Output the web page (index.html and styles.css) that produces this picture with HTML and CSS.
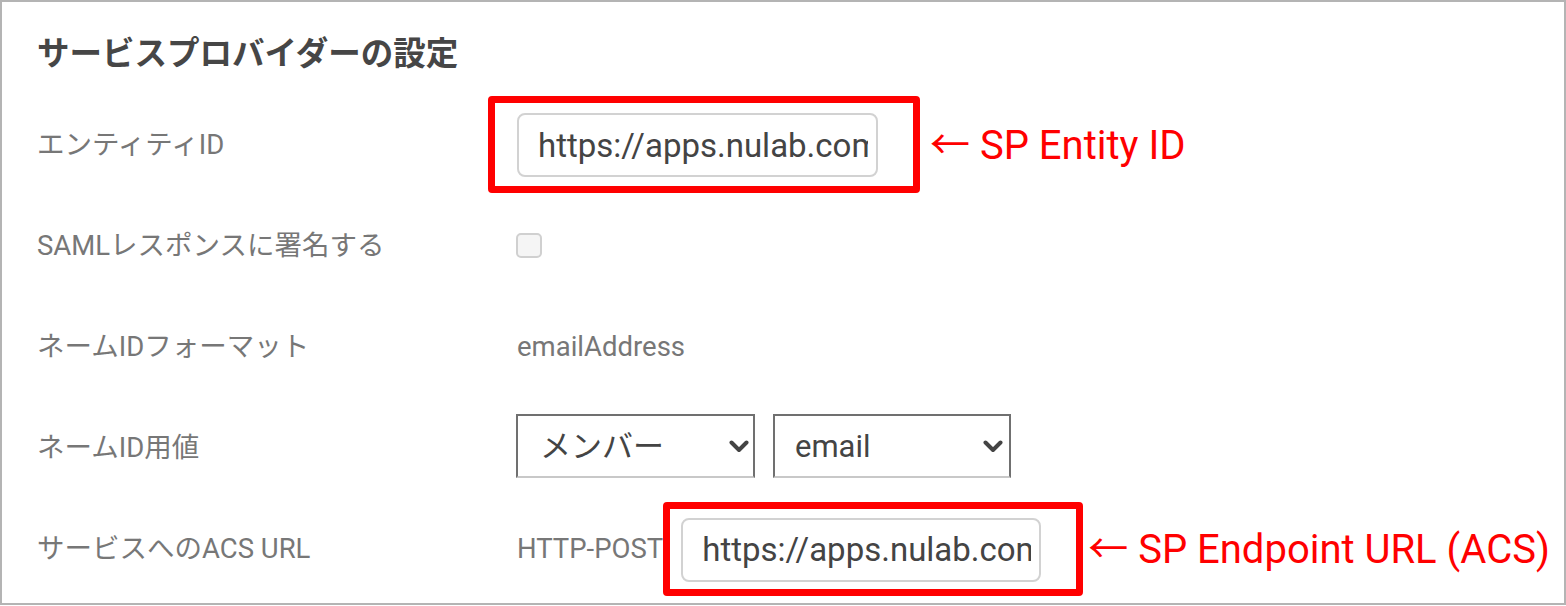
FILE: index.html
```html
<!DOCTYPE html>
<html lang="ja">
<head>
  <meta charset="UTF-8" />
  <meta name="viewport" content="width=device-width, initial-scale=1.0"/>
  <title>サービスプロバイダーの設定</title>
  <link rel="stylesheet" href="styles.css">
</head>
<body>
  <div class="panel">
    <h2 class="panel-title">サービスプロバイダーの設定</h2>

    <div class="row">
      <div class="row-label">エンティティID</div>
      <div class="row-value">
        <div class="callout callout-entity">
          <input class="text-input" type="text" value="https://apps.nulab.com/saml/metadata" readonly />
        </div>
        <span class="note"><span class="arrow">←</span> SP Entity ID</span>
      </div>
    </div>

    <div class="row">
      <div class="row-label">SAMLレスポンスに署名する</div>
      <div class="row-value">
        <input class="checkbox" type="checkbox" />
      </div>
    </div>

    <div class="row">
      <div class="row-label">ネームIDフォーマット</div>
      <div class="row-value">
        <span class="plain">emailAddress</span>
      </div>
    </div>

    <div class="row">
      <div class="row-label">ネームID用値</div>
      <div class="row-value selects">
        <div class="select">
          <select>
            <option>メンバー</option>
          </select>
          <svg class="chevron" width="20" height="13" viewBox="0 0 20 13"><polyline points="2.5,2.5 10,10 17.5,2.5" fill="none" stroke="#444" stroke-width="4" stroke-linecap="round" stroke-linejoin="round"/></svg>
        </div>
        <div class="select">
          <select>
            <option>email</option>
          </select>
          <svg class="chevron chevron-2" width="20" height="13" viewBox="0 0 20 13"><polyline points="2.5,2.5 10,10 17.5,2.5" fill="none" stroke="#444" stroke-width="4" stroke-linecap="round" stroke-linejoin="round"/></svg>
        </div>
      </div>
    </div>

    <div class="row">
      <div class="row-label">サービスへのACS URL</div>
      <div class="row-value">
        <span class="plain">HTTP-POST</span>
        <div class="callout callout-acs">
          <input class="text-input text-input-acs" type="text" value="https://apps.nulab.com/saml/acs" readonly />
        </div>
        <span class="note note-acs"><span class="arrow">←</span> SP Endpoint URL (ACS)</span>
      </div>
    </div>
  </div>
</body>
</html>
```

FILE: styles.css
```css
body {
  margin: 0;
  padding: 0;
  background: #fff;
  font-family: Roboto, "Noto Sans CJK JP", sans-serif;
}

.panel {
  box-sizing: border-box;
  width: 1566px;
  height: 605px;
  border: 2px solid #b4b4b4;
  padding: 28px 0 0 35px;
  overflow: hidden;
}

.panel-title {
  margin: 0 0 16px;
  font-size: 32.5px;
  line-height: 48px;
  font-weight: 700;
  color: #464646;
}

.row {
  display: flex;
  align-items: center;
  height: 101px;
}

.row-label {
  width: 480px;
  flex-shrink: 0;
  padding-bottom: 6px;
  font-size: 27.5px;
  color: #777;
}

.row-value {
  display: flex;
  align-items: center;
}

.plain {
  font-size: 27.5px;
  color: #777;
}

/* red annotation boxes */
.callout {
  border: 7px solid #ff0000;
  border-radius: 4px;
  padding: 10px 35px 9px 22px;
}

.callout-entity {
  margin-left: -29px;
}

.callout-acs {
  padding: 9px 35px 7px 11px;
  margin-left: 0;
}

.note {
  margin-left: 10px;
  padding-bottom: 6px;
  font-size: 40px;
  color: #ff0000;
  white-space: nowrap;
}

.note-acs {
  margin-left: 5px;
}

.arrow {
  font-family: "Noto Sans CJK JP", sans-serif;
}

.text-input {
  box-sizing: border-box;
  display: block;
  width: 361px;
  height: 64px;
  border: 2px solid #d2d2d2;
  border-radius: 8px;
  padding: 0 8px 0 19px;
  font-family: Roboto, sans-serif;
  font-size: 33px;
  color: #444;
  background: #fff;
  outline: none;
}

.text-input-acs {
  width: 360px;
}

.checkbox {
  appearance: none;
  box-sizing: border-box;
  width: 26px;
  height: 25px;
  margin: 0 0 0 -1px;
  border: 2px solid #d0d0d0;
  border-radius: 5px;
  background: #f5f5f5;
}

.selects {
  gap: 18px;
  margin-left: -1px;
  margin-top: -3px;
}

.select {
  position: relative;
}

.select select {
  appearance: none;
  box-sizing: border-box;
  width: 239px;
  height: 64px;
  border: 2px solid #707070;
  border-bottom-color: #c8c8c8;
  border-radius: 0;
  padding: 0 0 0 22px;
  background: #fff;
  font-family: Roboto, "Noto Sans CJK JP", sans-serif;
  font-size: 31px;
  color: #444;
}

.select + .select select {
  width: 238px;
  padding-left: 20px;
}

.chevron {
  position: absolute;
  right: 6px;
  top: 26px;
  pointer-events: none;
}

.chevron-2 {
  right: 8px;
}
```
